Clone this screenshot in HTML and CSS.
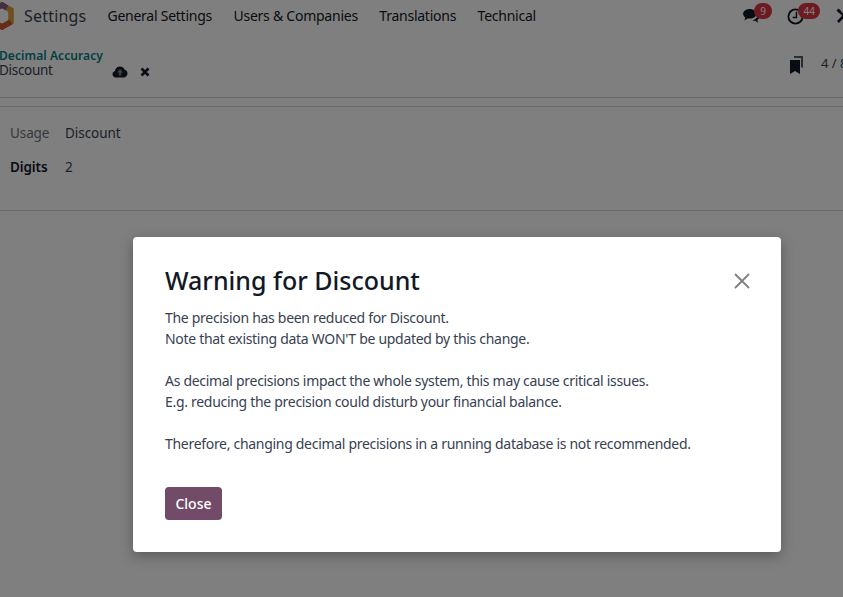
FILE: index.html
```html
<!DOCTYPE html>
<html lang="en">
<head>
    <meta charset="UTF-8">
    <meta name="viewport" content="width=device-width, initial-scale=1.0">
    <title>Settings</title>
    <link rel="stylesheet" href="styles.css">
</head>
<body>
    <nav class="topbar">
        <svg class="logo" viewBox="0 0 26 28" width="26" height="28">
            <path d="M13 3 22 8.200V19.800L13 25 4 19.800V8.200Z" fill="none" stroke="#d9a03c" stroke-width="5.500"/>
            <path d="M22 19.800 13 25 4 19.800" fill="none" stroke="#cf5a2e" stroke-width="5.500"/>
            <path d="M4 19.800V8.200L13 3 18 5.900" fill="none" stroke="#8f5e85" stroke-width="5.500"/>
        </svg>
        <span class="app-name">Settings</span>
        <div class="menu">
            <a href="#">General Settings</a>
            <a href="#">Users &amp; Companies</a>
            <a href="#">Translations</a>
            <a href="#">Technical</a>
        </div>
        <div class="systray">
            <span class="tray-item tray-chat">
                <svg viewBox="0 0 20 18" width="19" height="16"><path d="M8 1C3.800 1 .5 3.400.5 6.500c0 1.700 1 3.200 2.600 4.200L2 14l3.700-2.300c.7.100 1.500.2 2.300.2 4.200 0 7.500-2.400 7.500-5.400S12.200 1 8 1Z" fill="#111827"/><path d="M17 7.500c0 3-2.600 5.400-6 6.200 1 .5 2.100.7 3 .6l3.300 2.200-.7-3.100c1.500-.8 2.400-2.100 2.400-3.500 0-1-.7-2-2-2.400Z" fill="#111827"/></svg>
                <b class="badge">9</b>
            </span>
            <span class="tray-item tray-clock">
                <svg viewBox="0 0 18 18" width="17" height="17"><circle cx="9" cy="9" r="7.500" fill="none" stroke="#111827" stroke-width="2"/><path d="M10 4V10H6" fill="none" stroke="#111827" stroke-width="1.600"/></svg>
                <b class="badge">44</b>
            </span>
            <svg class="tools" viewBox="0 0 16 16" width="16" height="16"><path d="M2 14 11 4.500" stroke="#111827" stroke-width="2.600"/><path d="M9 4.500C9 2.500 11 .5 13.500 1L11.500 3.500 12.800 4.800 15 3C15.500 5.500 13 7.500 11 6.800Z" fill="#111827"/><path d="M2 2 14 14" stroke="#111827" stroke-width="2.400"/><path d="M.5 2.500 2.500.5 5 3 3 5Z" fill="#111827"/></svg>
        </div>
    </nav>

    <div class="control-panel">
        <div class="breadcrumb">
            <a href="#">Decimal Accuracy</a>
            <div class="current">
                <span class="current-name">Discount</span>
                <svg class="save-icon" viewBox="0 0 16 12" width="16" height="12"><path d="M4 11.500C1.800 11.500.5 10 .5 8.200.5 6.600 1.500 5.400 3 5 3.300 2.400 5.300.5 8 .5c2.200 0 4 1.300 4.700 3.200 1.700.3 2.800 1.700 2.800 3.500 0 2.400-1.700 4.300-4 4.300Z" fill="#111827"/><path d="M8 3 11 6.500H9.200V9.500H6.800V6.500H5Z" fill="#808080"/></svg>
                <svg class="discard-icon" viewBox="0 0 10 10" width="10" height="10"><path d="M1.500 1.500 8.500 8.500M8.500 1.500 1.500 8.500" stroke="#111827" stroke-width="2.600"/></svg>
            </div>
        </div>
        <div class="pager">
            <svg class="bookmark" viewBox="0 0 13 18" width="13" height="18"><path d="M4 0H13V12L11 11V2H4Z" fill="#5a5a5a"/><path d="M0 4H10V18L5 15 0 18Z" fill="#111827"/></svg>
            <span class="pager-value">4 / 8</span>
        </div>
    </div>

    <div class="sheet">
        <div class="field">
            <span class="field-label">Usage</span>
            <span class="field-value">Discount</span>
        </div>
        <div class="field">
            <span class="field-label field-label-bold">Digits</span>
            <span class="field-value">2</span>
        </div>
    </div>

    <div class="backdrop"></div>

    <div class="modal">
        <div class="modal-header">
            <h4>Warning for Discount</h4>
            <svg class="modal-close" viewBox="0 0 16 16" width="16" height="16"><path d="M1 1 15 15M15 1 1 15" stroke="#808080" stroke-width="1.800"/></svg>
        </div>
        <div class="modal-body">
            <p>The precision has been reduced for Discount.<br>Note that existing data WON'T be updated by this change.</p>
            <p>As decimal precisions impact the whole system, this may cause critical issues.<br>E.g. reducing the precision could disturb your financial balance.</p>
            <p>Therefore, changing decimal precisions in a running database is not recommended.</p>
        </div>
        <button class="btn-close" type="button">Close</button>
    </div>
</body>
</html>
```

FILE: styles.css
```css
html, body {
    height: 100%;
}
body {
    font-family: "Noto Sans", Arial, sans-serif;
    font-size: 14px;
    margin: 0;
    padding: 0;
    background-color: #fff;
    color: #374151;
    overflow: hidden;
    width: 843px;
    height: 597px;
}
a {
    color: inherit;
    text-decoration: none;
}

.topbar {
    height: 32px;
    display: flex;
    align-items: center;
    background-color: #fff;
    color: #111827;
}
.logo {
    margin-left: -11px;
    flex: none;
}
.app-name {
    font-size: 16px;
    margin-left: 9px;
    color: #374151;
    letter-spacing: .2px;
}
.menu {
    display: flex;
    gap: 21.500px;
    margin-left: 21px;
    padding-bottom: 2px;
    font-size: 14px;
    letter-spacing: -.25px;
}
.systray {
    margin-left: auto;
    display: flex;
    align-items: center;
    margin-right: -9px;
}
.tray-item {
    position: relative;
    display: flex;
}
.tray-chat {
    margin-right: 26px;
}
.tray-clock {
    margin-right: 32px;
}
.badge {
    position: absolute;
    top: -5px;
    left: 12px;
    min-width: 8px;
    padding: 0 5px;
    height: 16px;
    line-height: 16px;
    border-radius: 8px;
    background-color: #dc3545;
    color: #fff;
    font-size: 10px;
    font-weight: 400;
    text-align: center;
}
.tray-clock .badge {
    left: 11px;
    padding: 0 5.500px;
}

.control-panel {
    height: 66px;
    display: flex;
    justify-content: space-between;
    box-sizing: border-box;
    border-bottom: 1px solid #ced4da;
    background-color: #fff;
    padding-top: 16px;
}
.breadcrumb {
    margin-left: -1px;
}
.breadcrumb a {
    color: #017e84;
    font-size: 12px;
    line-height: 15px;
    font-weight: 600;
    letter-spacing: .08px;
    display: block;
}
.current {
    display: flex;
    align-items: center;
    height: 15px;
}
.current-name {
    width: 113px;
    line-height: 15px;
    font-size: 13.500px;
    letter-spacing: -.3px;
}
.save-icon {
    margin-top: 3px;
}
.discard-icon {
    margin-left: 12px;
    margin-top: 3px;
}
.pager {
    display: flex;
    align-items: flex-start;
    margin-right: -14px;
}
.bookmark {
    margin-top: 8px;
}
.pager-value {
    margin-left: 18px;
    margin-top: 6px;
    font-size: 13px;
    width: 36px;
    white-space: nowrap;
}

.sheet {
    margin-top: 8px;
    border-top: 1px solid #ced4da;
    border-bottom: 1px solid #ced4da;
    height: 105px;
    padding: 17px 10px 0;
    box-sizing: border-box;
}
.field {
    display: flex;
    height: 34px;
    font-size: 13.500px;
}
.field-label {
    width: 55px;
    color: #6b7280;
    letter-spacing: -.1px;
}
.field-label-bold {
    color: #111827;
    font-weight: 600;
}
.field-value {
    color: #374151;
    letter-spacing: -.05px;
}

.backdrop {
    position: absolute;
    inset: 0;
    background-color: rgba(0, 0, 0, .5);
}
.modal {
    position: absolute;
    left: 133px;
    top: 237px;
    width: 648px;
    height: 315px;
    box-sizing: border-box;
    padding: 24px 32px;
    background-color: #fff;
    border-radius: 4px;
    box-shadow: 0 4px 14px rgba(0, 0, 0, .3);
}
.modal-header {
    display: flex;
    justify-content: space-between;
    align-items: center;
    height: 39px;
}
.modal-header h4 {
    margin: 0 0 2px;
    font-size: 25px;
    font-weight: 500;
    color: #111827;
}
.modal-close {
    margin-right: -1px;
}
.modal-body {
    margin-top: 7px;
    line-height: 21px;
    font-size: 14px;
    letter-spacing: -.3px;
}
.modal-body p {
    margin: 0 0 21px;
}
.btn-close {
    margin-top: 33px;
    display: block;
    width: 57px;
    height: 33px;
    padding: 0;
    border: 0;
    border-radius: 4px;
    background-color: #714b67;
    color: #fff;
    font-family: inherit;
    font-size: 14px;
    font-weight: 500;
}
```
